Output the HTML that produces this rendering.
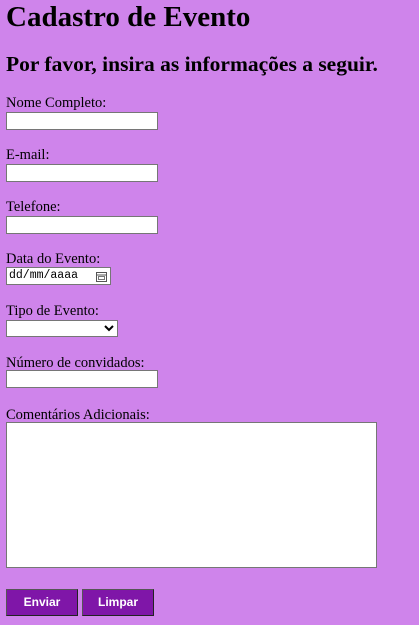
<!DOCTYPE html>
<html><head><meta charset="utf-8"><style>
body{margin:0;width:419px;height:625px;background:#cf84eb;font-family:"Liberation Serif",serif;position:relative;overflow:hidden;color:#000}
.a{position:absolute;margin:0;white-space:nowrap}
h1.a{font-size:29px;left:6px;top:0px;line-height:34px}
h2.a{font-size:21.5px;left:6px;top:50px;line-height:28px}
.l{position:absolute;left:6px;font-size:14.5px;line-height:18px;white-space:nowrap}
.i{position:absolute;left:6px;width:150px;height:16px;background:#fff;border:1px solid #767676}
.d{position:absolute;left:6px;background:#fff;border:1px solid #767676;font-family:"Liberation Mono",monospace;font-size:11.5px;line-height:16px;padding-left:2px;box-sizing:border-box;width:105px;height:18px}
.s{position:absolute;left:6px;width:110px;height:15px;background:#fff;border:1px solid #767676}
.b{position:absolute;top:589px;width:70px;height:25px;background:#7f16a8;border:1px solid #333;border-color:#555 #222 #222 #555;color:#fff;font:bold 12px "Liberation Sans",sans-serif;text-align:center;line-height:25px}
</style></head><body>
<h1 class="a">Cadastro de Evento</h1>
<h2 class="a">Por favor, insira as informações a seguir.</h2>
<div class="l" style="top:94px">Nome Completo:</div><div class="i" style="top:112px"></div>
<div class="l" style="top:146px">E-mail:</div><div class="i" style="top:164px"></div>
<div class="l" style="top:198px">Telefone:</div><div class="i" style="top:216px"></div>
<div class="l" style="top:250px">Data do Evento:</div>
<div class="d" style="top:267px">dd/mm/aaaa<svg style="position:absolute;right:3px;top:3px" width="11" height="11" viewBox="0 0 11 11"><rect x="0.5" y="1.5" width="10" height="9" fill="none" stroke="#555"/><line x1="0.5" y1="4" x2="10.5" y2="4" stroke="#555"/><rect x="2.5" y="5.5" width="6" height="3" fill="none" stroke="#777"/></svg></div>
<div class="l" style="top:302px">Tipo de Evento:</div>
<div class="s" style="top:320px"><svg style="position:absolute;right:3px;top:4px" width="10" height="7" viewBox="0 0 10 7"><path d="M1 1L5 5L9 1" fill="none" stroke="#000" stroke-width="2"/></svg></div>
<div class="l" style="top:354px">Número de convidados:</div><div class="i" style="top:370px"></div>
<div class="l" style="top:406px">Comentários Adicionais:</div>
<div style="position:absolute;left:6px;top:422px;width:369px;height:144px;background:#fff;border:1px solid #767676"></div>
<div class="b" style="left:6px">Enviar</div>
<div class="b" style="left:82px">Limpar</div>
</body></html>
